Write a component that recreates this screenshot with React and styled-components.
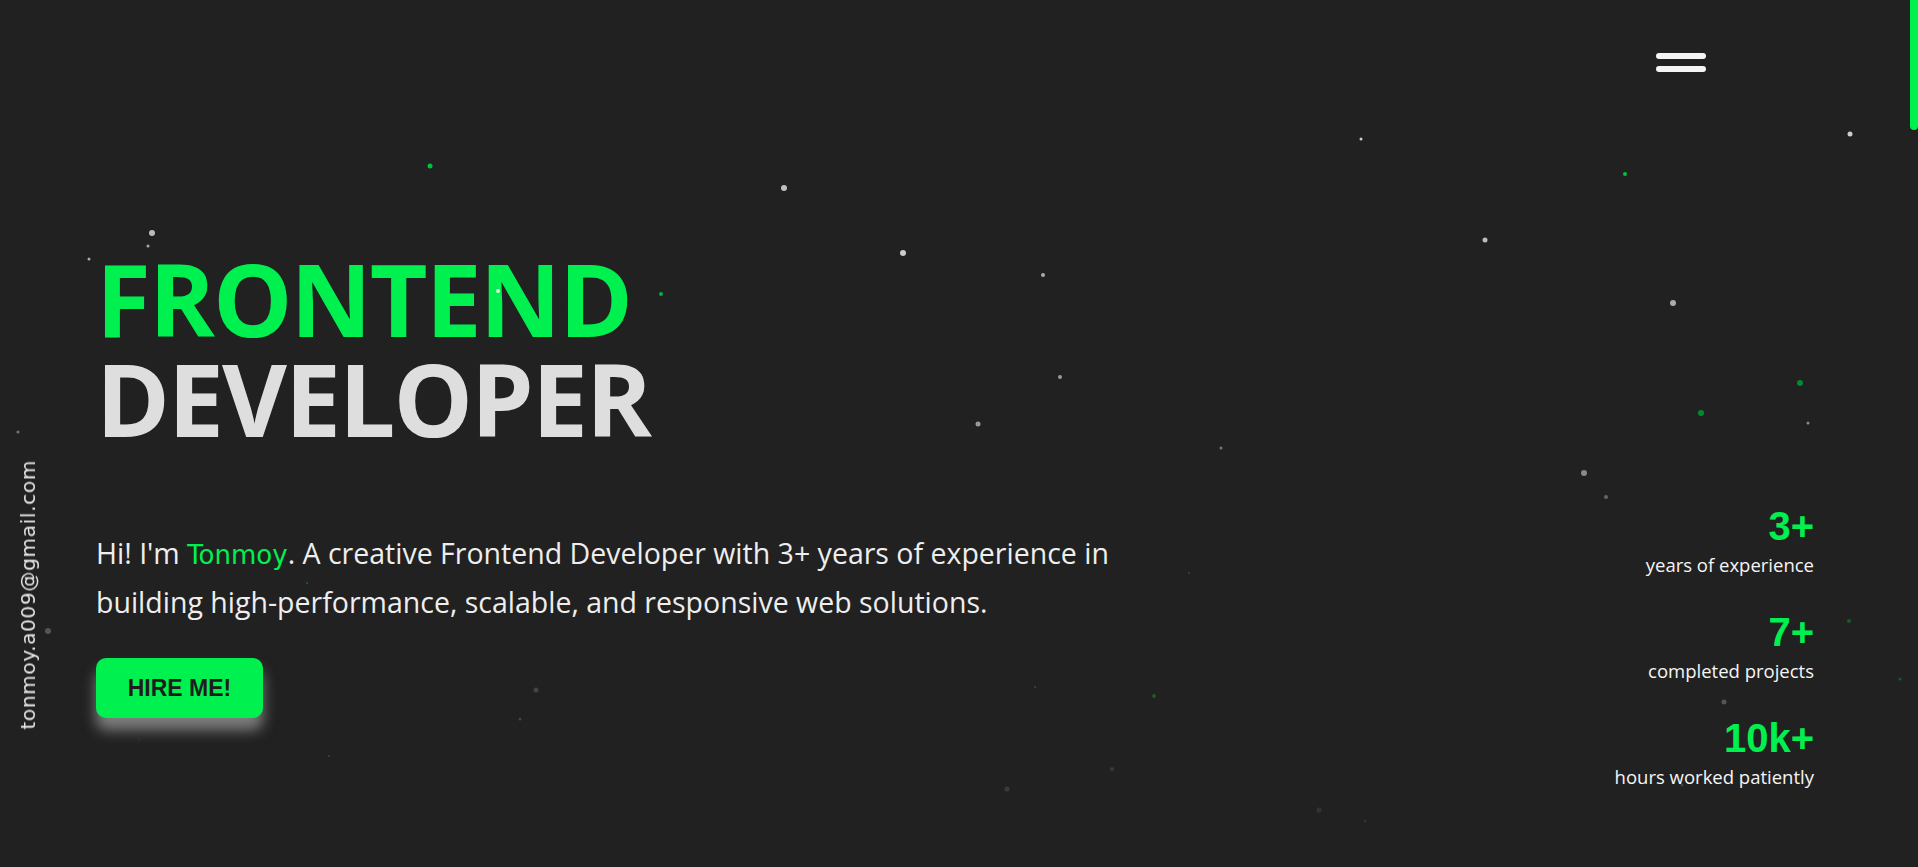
import React from 'react';
import styled, { createGlobalStyle } from 'styled-components';

const GREEN = '#00f050';

const GlobalStyle = createGlobalStyle`
  html, body {
    margin: 0;
    padding: 0;
    background: #212121;
    overflow: hidden;
  }
  * {
    box-sizing: border-box;
  }
`;

const Page = styled.div`
  position: relative;
  min-height: 100vh;
  padding: 0 104px 0 96px;
  background: #212121;
  font-family: 'Open Sans', 'Noto Sans', sans-serif;
  color: #eeeeee;
`;

const Header = styled.header`
  height: 125px;
  display: flex;
  justify-content: flex-end;
  align-items: center;
  padding-right: 108px;
`;

const Burger = styled.button`
  display: flex;
  flex-direction: column;
  gap: 7px;
  width: 50px;
  padding: 0;
  border: none;
  background: transparent;
  cursor: pointer;
`;

const BurgerLine = styled.span`
  display: block;
  height: 6px;
  width: 100%;
  border-radius: 3px;
  background: #f5f5f5;
`;

const Hero = styled.main`
  display: flex;
  justify-content: space-between;
  align-items: flex-start;
`;

const Intro = styled.section`
  padding-top: 123px;
`;

const Title = styled.h1`
  margin: 0;
  font-size: 100px;
  line-height: 1;
  font-weight: 700;
  letter-spacing: -2px;
`;

const TitleLine = styled.span`
  display: block;
  color: ${(props) => (props.accent ? GREEN : '#dedede')};
`;

const Lead = styled.p`
  margin: 82px 0 0;
  width: 1060px;
  font-size: 28.5px;
  line-height: 47px;
  color: #eeeeee;
`;

const Name = styled.span`
  color: ${GREEN};
  font-family: 'Comic Sans MS', 'DejaVu Sans', sans-serif;
  font-size: 26px;
`;

const HireButton = styled.button`
  margin-top: 32px;
  width: 167px;
  height: 60px;
  border: none;
  border-radius: 10px;
  background: ${GREEN};
  color: #1c1c1c;
  font-family: 'Liberation Sans', Arial, sans-serif;
  font-weight: 700;
  font-size: 23px;
  cursor: pointer;
  box-shadow: 0 12px 14px rgba(220, 220, 220, 0.5);
`;

const Stats = styled.aside`
  padding-top: 377px;
  display: flex;
  flex-direction: column;
  align-items: flex-end;
  gap: 31px;
`;

const Stat = styled.div`
  display: flex;
  flex-direction: column;
  align-items: flex-end;
  gap: 3px;
`;

const StatValue = styled.span`
  font-family: 'Comic Sans MS', 'Liberation Sans', sans-serif;
  font-weight: 700;
  font-size: 40px;
  line-height: 48px;
  color: ${GREEN};
`;

const StatLabel = styled.span`
  font-size: 18.5px;
  line-height: 24px;
  color: #f5f5f5;
`;

const Email = styled.a`
  position: fixed;
  left: 16px;
  bottom: 137px;
  writing-mode: vertical-rl;
  transform: rotate(180deg);
  font-family: 'Comic Sans MS', 'DejaVu Sans', sans-serif;
  font-size: 20px;
  letter-spacing: 0.7px;
  color: #e6e6e6;
  text-decoration: none;
`;

const ScrollThumb = styled.div`
  position: fixed;
  top: 0;
  right: 0;
  width: 8px;
  height: 130px;
  border-radius: 0 0 4px 4px;
  background: ${GREEN};
`;

const Sky = styled.div`
  position: fixed;
  inset: 0;
  pointer-events: none;
`;

const Dot = styled.span`
  position: absolute;
  border-radius: 50%;
  transform: translate(-50%, -50%);
`;

const stats = [
  { value: '3+', label: 'years of experience' },
  { value: '7+', label: 'completed projects' },
  { value: '10k+', label: 'hours worked patiently' },
];

// x, y, size, colour
const dots = [
  [430, 166, 5, '#00c040'],
  [784, 188, 6, '#c0c0c0'],
  [152, 233, 6, '#bbbbbb'],
  [148, 246, 3, '#aaaaaa'],
  [89, 259, 3, '#aaaaaa'],
  [903, 253, 6, '#cccccc'],
  [661, 294, 4, '#00b040'],
  [1043, 275, 4, '#aaaaaa'],
  [498, 291, 4, '#d8f5df'],
  [1361, 139, 3, '#cccccc'],
  [1625, 174, 4, '#00c040'],
  [1850, 134, 5, '#cccccc'],
  [1485, 240, 5, '#bbbbbb'],
  [1673, 303, 6, '#aaaaaa'],
  [1060, 377, 4, '#999999'],
  [978, 424, 5, '#999999'],
  [1221, 448, 3, '#777777'],
  [1800, 383, 6, '#008a30'],
  [1701, 413, 6, '#008a30'],
  [1808, 423, 3, '#888888'],
  [1584, 473, 6, '#888888'],
  [1606, 497, 4, '#666666'],
  [18, 432, 3, '#777777'],
  [48, 631, 6, '#555555'],
  [1189, 573, 2, '#444444'],
  [1849, 621, 4, '#1a5a2a'],
  [1900, 679, 3, '#1a5a2a'],
  [536, 690, 5, '#444444'],
  [520, 719, 3, '#444444'],
  [307, 583, 2, '#1a6a30'],
  [329, 756, 2, '#1a5a2a'],
  [1035, 687, 2, '#444444'],
  [1154, 696, 4, '#1a5a2a'],
  [1724, 702, 5, '#555555'],
  [1112, 769, 4, '#3a3a3a'],
  [1007, 789, 5, '#3a3a3a'],
  [1319, 810, 5, '#333333'],
  [1365, 821, 3, '#333333'],
  [139, 739, 2, '#1a4a25'],
  [1682, 785, 3, '#444444'],
];

export default function App() {
  return (
    <>
      <GlobalStyle />
      <Page>
        <Header>
          <Burger aria-label="Menu">
            <BurgerLine />
            <BurgerLine />
          </Burger>
        </Header>
        <Hero>
          <Intro>
            <Title>
              <TitleLine accent>FRONTEND</TitleLine>
              <TitleLine>DEVELOPER</TitleLine>
            </Title>
            <Lead>
              Hi! I'm <Name>Tonmoy</Name>. A creative Frontend Developer with 3+
              years of experience in building high-performance, scalable, and
              responsive web solutions.
            </Lead>
            <HireButton>HIRE ME!</HireButton>
          </Intro>
          <Stats>
            {stats.map((stat) => (
              <Stat key={stat.label}>
                <StatValue>{stat.value}</StatValue>
                <StatLabel>{stat.label}</StatLabel>
              </Stat>
            ))}
          </Stats>
        </Hero>
        <Email href="mailto:tonmoy.a009@gmail.com">tonmoy.a009@gmail.com</Email>
        <Sky>
          {dots.map(([x, y, size, color], index) => (
            <Dot
              key={index}
              style={{ left: x, top: y, width: size, height: size, background: color }}
            />
          ))}
        </Sky>
        <ScrollThumb />
      </Page>
    </>
  );
}
